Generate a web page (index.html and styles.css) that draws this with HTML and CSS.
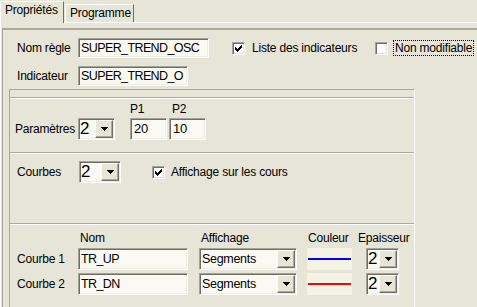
FILE: index.html
```html
<!DOCTYPE html>
<html lang="fr">
<head>
<meta charset="utf-8">
<title>Propriétés</title>
<link rel="stylesheet" href="styles.css">
</head>
<body>
<div class="tabs">
  <div class="tab tab-active">Propriétés</div>
  <div class="tab tab-idle">Programme</div>
</div>
<div class="panel">
  <div class="page">
    <div class="head">
      <div class="row">
        <span class="lbl">Nom règle</span>
        <span class="field f-name">SUPER_TREND_OSC</span>
        <span class="check check-liste"><span class="cbox"><svg viewBox="0 0 7 7" width="7" height="7" shape-rendering="crispEdges"><path d="M6 0h1v1H6zM5 1h2v1H5zM0 2h1v1H0zM4 2h3v1H4zM0 3h2v1H0zM3 3h3v1H3zM0 4h5v1H0zM1 5h3v1H1zM2 6h1v1H2z"/></svg></span><span class="ctext">Liste des indicateurs</span></span>
        <span class="check"><span class="cbox"></span><span class="ctext focus">Non modifiable</span></span>
      </div>
      <div class="row row2">
        <span class="lbl">Indicateur</span>
        <span class="field f-ind">SUPER_TREND_O</span>
      </div>
    </div>
    <div class="group">
      <section class="sec sec-params">
        <span class="hdr p1">P1</span>
        <span class="hdr p2">P2</span>
        <span class="lbl lbl-params">Paramètres</span>
        <span class="combo c-params"><span class="val big">2</span><span class="btn"><svg viewBox="0 0 7 4" width="7" height="4" shape-rendering="crispEdges"><path d="M0 0h7v1H0zM1 1h5v1H1zM2 2h3v1H2zM3 3h1v1H3z"/></svg></span></span>
        <span class="field f-p in-p1">20</span>
        <span class="field f-p in-p2">10</span>
      </section>
      <section class="sec sec-courbes">
        <span class="lbl lbl-courbes">Courbes</span>
        <span class="combo c-courbes"><span class="val big">2</span><span class="btn"><svg viewBox="0 0 7 4" width="7" height="4" shape-rendering="crispEdges"><path d="M0 0h7v1H0zM1 1h5v1H1zM2 2h3v1H2zM3 3h1v1H3z"/></svg></span></span>
        <span class="check check-aff"><span class="cbox"><svg viewBox="0 0 7 7" width="7" height="7" shape-rendering="crispEdges"><path d="M6 0h1v1H6zM5 1h2v1H5zM0 2h1v1H0zM4 2h3v1H4zM0 3h2v1H0zM3 3h3v1H3zM0 4h5v1H0zM1 5h3v1H1zM2 6h1v1H2z"/></svg></span><span class="ctext">Affichage sur les cours</span></span>
      </section>
      <section class="sec sec-table">
        <span></span>
        <span class="hdr h-nom">Nom</span>
        <span class="hdr h-aff">Affichage</span>
        <span class="hdr h-coul">Couleur</span>
        <span class="hdr h-ep">Epaisseur</span>

        <span class="lbl">Courbe 1</span>
        <span class="field f-curve">TR_UP</span>
        <span class="combo c-seg"><span class="val">Segments</span><span class="btn"><svg viewBox="0 0 7 4" width="7" height="4" shape-rendering="crispEdges"><path d="M0 0h7v1H0zM1 1h5v1H1zM2 2h3v1H2zM3 3h1v1H3z"/></svg></span></span>
        <span class="swatch"><span class="line line-blue"></span></span>
        <span class="combo c-ep"><span class="val big">2</span><span class="btn"><svg viewBox="0 0 7 4" width="7" height="4" shape-rendering="crispEdges"><path d="M0 0h7v1H0zM1 1h5v1H1zM2 2h3v1H2zM3 3h1v1H3z"/></svg></span></span>

        <span class="lbl">Courbe 2</span>
        <span class="field f-curve">TR_DN</span>
        <span class="combo c-seg"><span class="val">Segments</span><span class="btn"><svg viewBox="0 0 7 4" width="7" height="4" shape-rendering="crispEdges"><path d="M0 0h7v1H0zM1 1h5v1H1zM2 2h3v1H2zM3 3h1v1H3z"/></svg></span></span>
        <span class="swatch"><span class="line line-red"></span></span>
        <span class="combo c-ep"><span class="val big">2</span><span class="btn"><svg viewBox="0 0 7 4" width="7" height="4" shape-rendering="crispEdges"><path d="M0 0h7v1H0zM1 1h5v1H1zM2 2h3v1H2zM3 3h1v1H3z"/></svg></span></span>
      </section>
    </div>
  </div>
</div>
</body>
</html>
```

FILE: styles.css
```css
* { box-sizing: border-box; }
html, body { margin: 0; height: 100%; }
body {
  background: #e6e5d8;
  font-family: "Liberation Sans", Arial, sans-serif;
  font-size: 12px;
  letter-spacing: -0.2px;
  color: #000;
  overflow: hidden;
}

/* tabs */
.tabs { display: flex; align-items: flex-end; height: 22px; position: relative; z-index: 1; }
.tab {
  background: #e6e5d8;
  border-top: 1px solid #fff;
  border-left: 1px solid #fff;
  border-right: 1px solid #716f64;
  padding: 1px 0 0 4px;
  line-height: 14px;
  white-space: nowrap;
}
.tab-active { width: 64px; height: 22px; margin-bottom: -1px; }
.tab-idle { width: 69px; height: 18px; margin-left: 1px; }

.panel {
  border-top: 1px solid #fff;
  border-left: 1px solid #fff;
  height: 285px;
  overflow: hidden;
}
.page {
  margin: 5px 0 0 1px;
  height: 279px;
  border-top: 2px solid #aca899;
  border-left: 1px solid #aca899;
}
.head { padding: 8px 0 0 14px; }
.row { display: flex; align-items: center; height: 20px; }
.row2 { margin-top: 8px; }
.lbl { width: 61px; white-space: nowrap; }

/* sunken fields */
.field, .combo {
  height: 20px;
  background: #fafaf2;
  border: 1px solid;
  border-color: #a5a498 #fff #fff #a5a498;
  box-shadow: inset 1px 1px 0 #6f6e64, inset -1px -1px 0 #efeee4;
  font-size: 12.5px;
  letter-spacing: -0.6px;
  line-height: 18px;
  padding-left: 2px;
  white-space: nowrap;
  overflow: hidden;
}
.f-name { width: 131px; }
.f-ind { width: 110px; }

/* checkboxes */
.check { display: flex; align-items: center; white-space: nowrap; }
.check-liste { width: 143px; margin-left: 23px; }
.cbox {
  width: 13px; height: 13px;
  flex: none;
  background: #fff;
  border: 1px solid;
  border-color: #a5a498 #fff #fff #a5a498;
  box-shadow: inset 1px 1px 0 #6f6e64, inset -1px -1px 0 #e2e1d4;
  display: flex; align-items: center; justify-content: center;
}
.cbox svg { display: block; }
.ctext { margin-left: 7px; }
.focus { margin-left: 5px; border: 1px dotted #000; padding: 0 1px; line-height: 14px; }

/* group */
.group {
  margin: 3px 0 0 6px;
  width: 406px;
  height: 230px;
  border-top: 1px solid #aca899;
  border-left: 1px solid #aca899;
  border-right: 1px solid #fff;
  padding-top: 7px;
}
.sec {
  border-top: 1px solid #aca899;
  box-shadow: inset 0 1px 0 #fff;
}
.sec-params {
  height: 55px;
  padding: 4px 0 0 5px;
  display: grid;
  grid-template-columns: 63px 52px 39px 37px;
  grid-template-rows: 14px 22px;
  row-gap: 2px;
  align-items: center;
}
.hdr { line-height: 14px; white-space: nowrap; }
.p1 { grid-column: 3; grid-row: 1; }
.p2 { grid-column: 4; grid-row: 1; padding-left: 3px; }
.lbl-params { grid-column: 1; grid-row: 2; }
.c-params { grid-column: 2; grid-row: 2; width: 37px; }
.in-p1 { grid-column: 3; grid-row: 2; width: 37px; }
.in-p2 { grid-column: 4; grid-row: 2; width: 37px; }

.combo { display: flex; height: 22px; padding-left: 0; letter-spacing: -0.3px; }
.f-p { height: 22px; line-height: 20px; padding-left: 3px; font-size: 13px; letter-spacing: -0.3px; }
.val { flex: 1; padding-left: 2px; line-height: 20px; overflow: hidden; }
.val.big { font-size: 17px; padding-left: 1px; }
.btn {
  flex: none;
  width: 18px;
  margin: 1px 1px 1px 0;
  background: #e6e5d8;
  border-top: 1px solid #fff;
  border-left: 1px solid #fff;
  border-right: 1px solid #716f64;
  border-bottom: 1px solid #716f64;
  box-shadow: inset -1px -1px 0 #aca899;
  display: flex; align-items: center; justify-content: center;
}
.btn svg { display: block; }

.sec-courbes {
  height: 71px;
  padding: 8px 0 0 7px;
  display: flex;
  align-items: flex-start;
}
.sec-courbes > * { height: 22px; }
.lbl-courbes { width: 62px; line-height: 22px; }
.c-courbes { width: 42px; }
.check-aff { margin-left: 31px; }
.check-aff .ctext { margin-left: 6px; }

.sec-table {
  height: 96px;
  padding: 7px 0 0 7px;
  display: grid;
  grid-template-columns: 61px 121px 108px 59px 33px;
  grid-template-rows: 14px 22px 22px;
  row-gap: 3px;
  align-content: start;
  align-items: center;
}
.h-nom { padding-left: 2px; }
.h-aff { padding-left: 2px; }
.h-coul { padding-left: 1px; }
.h-ep { margin-left: -8px; }
.f-curve { width: 110px; height: 22px; line-height: 20px; }
.c-seg { width: 98px; }
.c-ep { width: 33px; }
.swatch {
  width: 45px; height: 22px;
  background: #f4f3e6;
  display: flex; align-items: center; padding: 0 1px;
}
.line { display: block; width: 100%; height: 2px; }
.line-blue { background: #0000ff; }
.line-red { background: #ff0000; }
```
